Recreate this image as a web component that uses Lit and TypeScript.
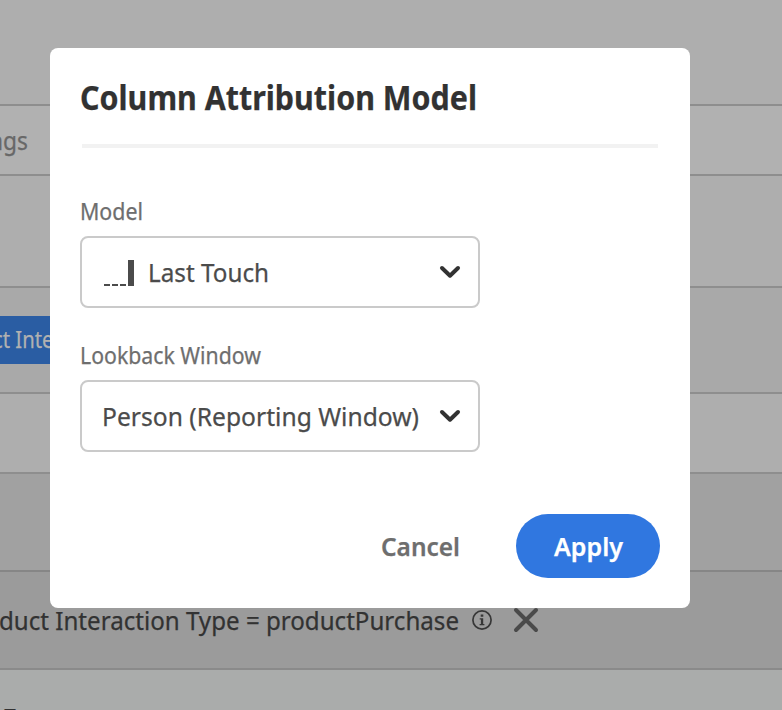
import { LitElement, html, css } from "lit";
import { customElement } from "lit/decorators.js";

// A single line of text set to an exact advance width.
const line = (cls: string, text: string, width: number, height: number, baseline: number) => html`
  <svg class="line ${cls}" width=${width} height=${height}>
    <text x="0" y=${baseline} textLength=${width} lengthAdjust="spacingAndGlyphs">${text}</text>
  </svg>`;

const chevron = html`
  <svg class="chevron" width="24" height="16" viewBox="0 0 24 16">
    <path d="M4 4l8 7.7L20 4" fill="none" stroke="#323232" stroke-width="4" stroke-linecap="round" stroke-linejoin="round" />
  </svg>`;

@customElement("app-root")
export class AppRoot extends LitElement {
  static styles = css`
    :host {
      display: block;
      position: relative;
      width: 782px;
      height: 710px;
      overflow: hidden;
      background: #aaacab;
      font-family: "Noto Sans", "Open Sans", sans-serif;
    }
    * { box-sizing: border-box; }
    .line { display: block; flex: none; overflow: visible; }
    .line text { fill: currentColor; stroke: currentColor; stroke-width: 0.25px; }
    .rows {
      display: grid;
      grid-template-rows: 106px 70px 112px 106px 80px 98px 98px 60px;
      height: 710px;
      overflow: hidden;
    }
    .row {
      display: flex;
      align-items: flex-start;
      background: #aeaeae;
      border-bottom: 2px solid #8e8e8e;
    }
    .tabs { background: #b1b1b1; padding-top: 16px; }
    .drop { background: #a9a9a9; padding-top: 28px; }
    .head { background: #a1a1a1; border-color: #868686; }
    .segment { background: #9b9b9b; border-color: #8a8a8a; padding-top: 30px; }
    .last { background: #aaacab; border: 0; padding-top: 32px; }
    .tab-text { color: #686868; font-size: 26px; margin-left: -11px; }
    .chip { width: 140px; height: 48px; background: #2a5da3; padding-top: 8px; }
    .chip-text { color: #b1b1b1; font-size: 22.8px; margin-left: -7px; }
    .segment-text { color: #323232; font-size: 26px; margin-left: -1px; }
    .next-text { color: #323232; font-size: 25px; margin-left: 2px; }
    .info { margin: 8px 0 0 13px; }
    .close { margin: 4px 0 0 20px; }

    .dialog {
      position: absolute;
      left: 50px;
      top: 48px;
      width: 640px;
      height: 560px;
      padding: 28px 30px 30px;
      display: flex;
      flex-direction: column;
      background: #fff;
      border-radius: 8px;
    }
    .title { color: #323232; font-size: 34px; font-weight: 700; margin: 0; }
    .rule { height: 4px; margin: 24px 2px 0; background: #f2f2f2; }
    .fields { display: flex; flex-direction: column; gap: 32px; padding-top: 48px; }
    .label { color: #6e6e6e; font-size: 22.8px; margin-bottom: 8px; }
    .picker {
      display: flex;
      align-items: center;
      width: 400px;
      height: 72px;
      padding: 0 16px 0 20px;
      background: #fff;
      border: 2px solid #cacaca;
      border-radius: 8px;
    }
    .value { color: #4b4b4b; font-size: 26px; }
    .model { margin: 2px 14px 0 2px; }
    .chevron { margin-left: auto; }
    .actions { display: flex; align-items: center; justify-content: flex-end; gap: 56px; margin-top: auto; height: 64px; }
    .cancel { color: #6e6e6e; }
    .strong { font-size: 26px; font-weight: 600; }
    .apply {
      display: flex;
      align-items: center;
      justify-content: center;
      width: 144px;
      height: 64px;
      color: #fff;
      background: #3077e0;
      border-radius: 32px;
    }
  `;

  render() {
    return html`
      <div class="rows">
        <div class="row"></div>
        <div class="row tabs">${line("tab-text", "ngs", 39, 36, 28)}</div>
        <div class="row"></div>
        <div class="row drop">
          <div class="chip">${line("chip-text", "ct Interaction", 127, 32, 24)}</div>
        </div>
        <div class="row"></div>
        <div class="row head"></div>
        <div class="row segment">
          ${line("segment-text", "duct Interaction Type = productPurchase", 460, 36, 28)}
          <svg class="info" width="20" height="20" viewBox="0 0 20 20">
            <circle cx="10" cy="10" r="9.1" fill="none" stroke="#373737" stroke-width="1.7" />
            <path d="M8.7 4.5h2.6v2.3H8.7zM7.7 8.2h3.5v5.7h1.2v1.4H7.6v-1.4h1.3V9.6H7.7z" fill="#373737" />
          </svg>
          <svg class="close" width="28" height="28" viewBox="0 0 28 28">
            <path d="M4 4l20 20M24 4L4 24" stroke="#4a4a4a" stroke-width="4" stroke-linecap="round" />
          </svg>
        </div>
        <div class="row last">${line("next-text", "F", 14, 30, 25)}</div>
      </div>

      <section class="dialog" role="dialog">
        <h1 class="title">${line("", "Column Attribution Model", 397, 44, 34)}</h1>
        <div class="rule"></div>
        <div class="fields">
          <div>
            ${line("label", "Model", 63, 32, 24)}
            <div class="picker">
              <svg class="model" width="30" height="26" viewBox="0 0 30 26">
                <path d="M24 0h6v26h-6zM0 24h6v2H0zM8 24h6v2H8zM16 24h6v2h-6z" fill="#4b4b4b" />
              </svg>
              ${line("value", "Last Touch", 121, 36, 28)}
              ${chevron}
            </div>
          </div>
          <div>
            ${line("label", "Lookback Window", 181, 32, 24)}
            <div class="picker">
              ${line("value", "Person (Reporting Window)", 317, 36, 28)}
              ${chevron}
            </div>
          </div>
        </div>
        <div class="actions">
          ${line("cancel strong", "Cancel", 79, 36, 28)}
          <div class="apply">${line("strong", "Apply", 69, 36, 28)}</div>
        </div>
      </section>
    `;
  }
}
